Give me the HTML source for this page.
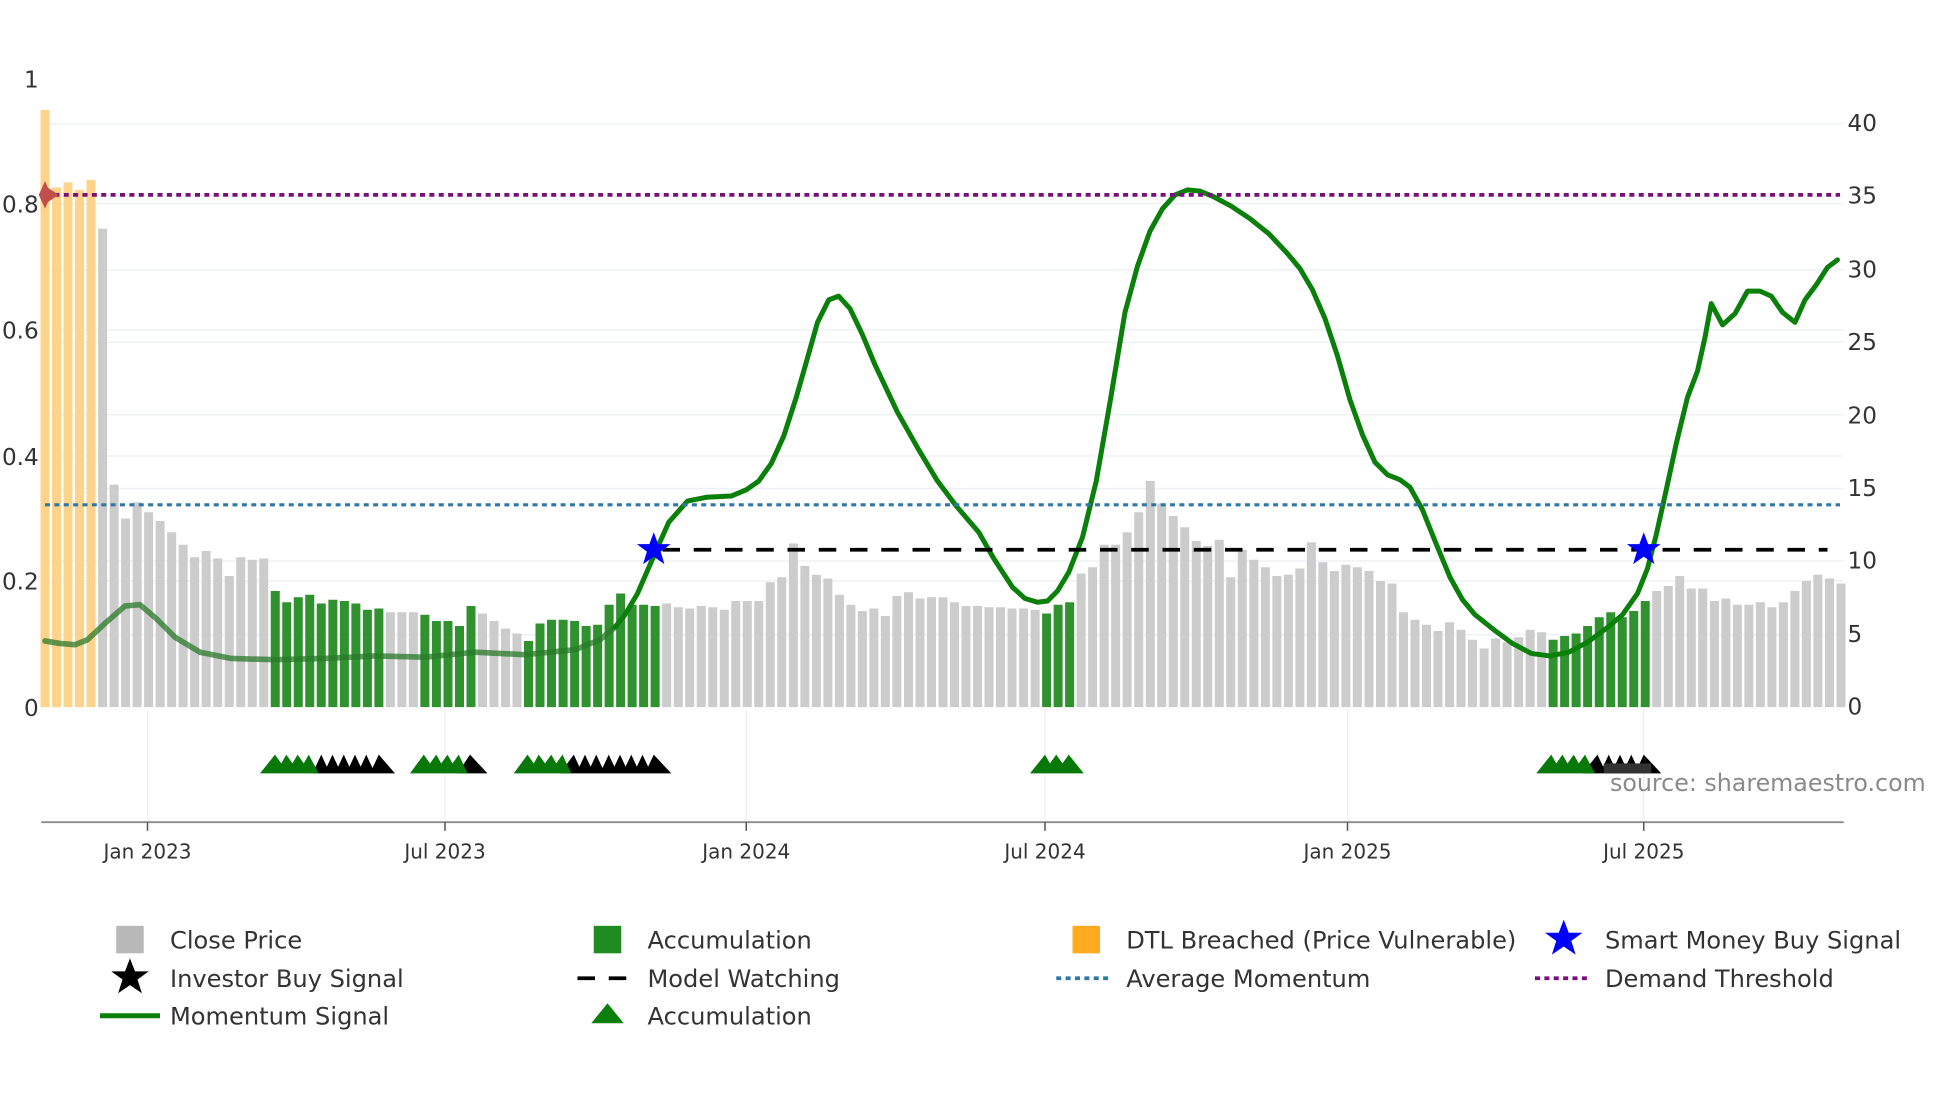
<!DOCTYPE html>
<html><head><meta charset="utf-8"><style>
html,body{margin:0;padding:0;background:#fff;}
svg{display:block;}
text{font-family:"DejaVu Sans","Liberation Sans",sans-serif;fill:#333;}
</style></head><body>
<svg width="1960" height="1102" viewBox="0 0 1568 882" preserveAspectRatio="none" xmlns="http://www.w3.org/2000/svg">
<rect width="1568" height="882" fill="#fff"/>
<g stroke="#eceff3" stroke-width="1">
<path d="M33 99H1475M33 157H1475M33 216H1475M33 274H1475M33 332H1475M33 391H1475M33 449H1475M33 508H1475"/>
<path d="M33 163H1475M33 264H1475M33 365H1475M33 465H1475"/>
<path d="M118 568V658M356 568V658M597 568V658M836 568V658M1078 568V658M1315 568V658"/>
</g>
<path fill="#ffd48a" d="M32.4,566V88h7.2V566zM41.6,566V150h7.2V566zM50.8,566V146h7.2V566zM60,566V152h7.2V566zM69.2,566V144h7.2V566z"/>
<path fill="#cccccc" d="M78.5,566V183h7.2V566zM87.7,566V388h7.2V566zM96.9,566V415h7.2V566zM106.1,566V402h7.2V566zM115.3,566V410h7.2V566zM124.5,566V417h7.2V566zM133.7,566V426h7.2V566zM142.9,566V436h7.2V566zM152.1,566V446h7.2V566zM161.3,566V441h7.2V566zM170.6,566V447h7.2V566zM179.8,566V461h7.2V566zM189,566V446h7.2V566zM198.2,566V448h7.2V566zM207.4,566V447h7.2V566z
M308.7,566V490h7.2V566zM317.9,566V490h7.2V566zM327.1,566V490h7.2V566z
M382.4,566V491h7.2V566zM391.6,566V497h7.2V566zM400.8,566V503h7.2V566zM410,566V507h7.2V566z
M529.7,566V483h7.2V566zM539,566V486h7.2V566zM548.2,566V487h7.2V566zM557.4,566V485h7.2V566zM566.6,566V486h7.2V566zM575.8,566V488h7.2V566zM585,566V481h7.2V566zM594.2,566V481h7.2V566zM603.4,566V481h7.2V566zM612.6,566V466h7.2V566zM621.8,566V462h7.2V566zM631.1,566V435h7.2V566zM640.3,566V453h7.2V566zM649.5,566V460h7.2V566zM658.7,566V463h7.2V566zM667.9,566V476h7.2V566zM677.1,566V484h7.2V566zM686.3,566V489h7.2V566zM695.5,566V487h7.2V566zM704.7,566V493h7.2V566zM713.9,566V477h7.2V566zM723.2,566V474h7.2V566zM732.4,566V479h7.2V566zM741.6,566V478h7.2V566zM750.8,566V478h7.2V566zM760,566V482h7.2V566zM769.2,566V485h7.2V566zM778.4,566V485h7.2V566zM787.6,566V486h7.2V566zM796.8,566V486h7.2V566zM806,566V487h7.2V566zM815.3,566V487h7.2V566zM824.5,566V488h7.2V566z
M861.3,566V459h7.2V566zM870.5,566V454h7.2V566zM879.7,566V436h7.2V566zM888.9,566V436h7.2V566zM898.1,566V426h7.2V566zM907.4,566V410h7.2V566zM916.6,566V385h7.2V566zM925.8,566V403h7.2V566zM935,566V413h7.2V566zM944.2,566V422h7.2V566zM953.4,566V433h7.2V566zM962.6,566V437h7.2V566zM971.8,566V432h7.2V566zM981,566V462h7.2V566zM990.2,566V440h7.2V566zM999.5,566V448h7.2V566zM1008.7,566V454h7.2V566zM1017.9,566V461h7.2V566zM1027.1,566V460h7.2V566zM1036.3,566V455h7.2V566zM1045.5,566V434h7.2V566zM1054.7,566V450h7.2V566zM1063.9,566V457h7.2V566zM1073.1,566V452h7.2V566zM1082.3,566V454h7.2V566zM1091.6,566V457h7.2V566zM1100.8,566V465h7.2V566zM1110,566V467h7.2V566zM1119.2,566V490h7.2V566zM1128.4,566V496h7.2V566zM1137.6,566V500h7.2V566zM1146.8,566V505h7.2V566zM1156,566V498h7.2V566zM1165.2,566V504h7.2V566zM1174.4,566V512h7.2V566zM1183.7,566V519h7.2V566zM1192.9,566V511h7.2V566zM1202.1,566V514h7.2V566zM1211.3,566V510h7.2V566zM1220.5,566V504h7.2V566zM1229.7,566V506h7.2V566z
M1321.8,566V473h7.2V566zM1331,566V469h7.2V566zM1340.2,566V461h7.2V566zM1349.4,566V471h7.2V566zM1358.6,566V471h7.2V566zM1367.9,566V481h7.2V566zM1377.1,566V479h7.2V566zM1386.3,566V484h7.2V566zM1395.5,566V484h7.2V566zM1404.7,566V482h7.2V566zM1413.9,566V486h7.2V566zM1423.1,566V482h7.2V566zM1432.3,566V473h7.2V566zM1441.5,566V465h7.2V566zM1450.7,566V460h7.2V566zM1460,566V463h7.2V566zM1469.2,566V467h7.2V566z"/>
<path fill="#2f922f" d="M216.6,566V473h7.2V566zM225.8,566V482h7.2V566zM235,566V478h7.2V566zM244.2,566V476h7.2V566zM253.4,566V483h7.2V566zM262.7,566V480h7.2V566zM271.9,566V481h7.2V566zM281.1,566V483h7.2V566zM290.3,566V488h7.2V566zM299.5,566V487h7.2V566z
M336.3,566V492h7.2V566zM345.5,566V497h7.2V566zM354.8,566V497h7.2V566zM364,566V501h7.2V566zM373.2,566V485h7.2V566z
M419.2,566V513h7.2V566zM428.4,566V499h7.2V566zM437.6,566V496h7.2V566zM446.9,566V496h7.2V566zM456.1,566V497h7.2V566zM465.3,566V501h7.2V566zM474.5,566V500h7.2V566zM483.7,566V484h7.2V566zM492.9,566V475h7.2V566zM502.1,566V484h7.2V566zM511.3,566V484h7.2V566zM520.5,566V485h7.2V566z
M833.7,566V491h7.2V566zM842.9,566V484h7.2V566zM852.1,566V482h7.2V566z
M1238.9,566V512h7.2V566zM1248.1,566V509h7.2V566zM1257.3,566V507h7.2V566zM1266.5,566V501h7.2V566zM1275.8,566V494h7.2V566zM1285,566V490h7.2V566zM1294.2,566V494h7.2V566zM1303.4,566V489h7.2V566zM1312.6,566V481h7.2V566z"/>
<polyline fill="none" stroke="#2a7a2a" stroke-opacity="0.75" stroke-width="4.5" stroke-linejoin="round" stroke-linecap="round" points="36,513 48,515 60,516 70,512 85,498 100,485 112,484 125,495 140,510 160,522 185,527 220,528 260,527 300,525 340,526 380,522 420,524 460,520 480,512 492,502"/>
<polyline fill="none" stroke="#0a800a" stroke-width="4" stroke-linejoin="round" stroke-linecap="round" points="492,502 500,492 510,475 523,445 535,418 550,401 565,398 585,397 597,392 607,385 617,371 627,349 637,318 645,290 654,258 663,240 671,237 680,247 690,268 700,292 718,330 735,360 750,385 765,405 783,426 795,447 810,470 820,479 830,482 838,481 846,473 855,458 866,430 877,385 888,322 900,250 910,213 920,185 930,167 940,156 950,152 960,153 970,157 985,165 1000,175 1015,187 1030,203 1040,215 1050,232 1060,255 1070,285 1080,320 1090,348 1100,370 1110,380 1120,384 1128,390 1138,408 1148,433 1160,462 1170,480 1180,492 1195,504 1210,515 1225,523 1240,525 1255,522 1270,514 1285,503 1298,492 1310,475 1318,455 1325,428 1333,392 1341,355 1350,318 1358,297 1364,270 1369,243 1378,260 1388,251 1398,233 1408,233 1417,237 1426,250 1436,258 1444,240 1453,228 1462,214 1470,208"/>
<line x1="36" y1="156" x2="1472" y2="156" stroke="#7a0e7a" stroke-width="3" stroke-dasharray="4 3.5"/>
<line x1="36" y1="404" x2="1472" y2="404" stroke="#2e78a8" stroke-width="2.5" stroke-dasharray="4 3.5"/>
<line x1="530" y1="440" x2="1462" y2="440" stroke="#000" stroke-width="3" stroke-dasharray="14 11"/>
<path fill="#c2504a" d="M36,145L41,156L36,167L31,156Z"/><path fill="#c2504a" d="M38,150L47,156L38,162Z"/>
<path fill="#0000ff" d="M523,426L526.5,435.5L536.5,435.5L528.5,441.5L531.5,451.5L523,445.5L514.5,451.5L517.5,441.5L509.5,435.5L519.5,435.5Z"/>
<path fill="#0000ff" d="M1315,426L1318.5,435.5L1328.5,435.5L1320.5,441.5L1323.5,451.5L1315,445.5L1306.5,451.5L1309.5,441.5L1301.5,435.5L1311.5,435.5Z"/>
<g fill="#000">
<path d="M250,619L257,604L264,619ZM259,619L266,604L273,619ZM268,619L275,604L282,619ZM277,619L284,604L291,619ZM286,619L293,604L300,619ZM296,619L303,604L316,619Z"/>
<path d="M366,619L376,604L390,619Z"/>
<path d="M448,619L459,604L466,619ZM461,619L468,604L475,619ZM470,619L477,604L484,619ZM480,619L487,604L494,619ZM489,619L496,604L503,619ZM498,619L505,604L512,619ZM507,619L514,604L521,619ZM516,619L523,604L537,619Z"/>
<path d="M1266,619L1278,604L1285,619ZM1280,619L1287,604L1294,619ZM1289,619L1296,604L1303,619ZM1298,619L1305,604L1312,619ZM1308,619L1315,604L1329,619Z"/>
</g>
<rect x="1283" y="611" width="38" height="8" fill="#333"/>
<g fill="#087808">
<path d="M208,619L220,604L225,611L229,604L234,611L238,604L243,611L247,604L255,619Z"/>
<path d="M328,619L339,604L344,611L349,604L353,611L358,604L362,611L367,604L374,619Z"/>
<path d="M411,619L422,604L427,611L431,604L436,611L441,604L445,611L450,604L457,619Z"/>
<path d="M824,619L836,604L840,611L845,604L850,611L855,604L867,619Z"/>
<path d="M1229,619L1241,604L1245,611L1250,604L1254,611L1259,604L1263,611L1268,604L1276,619Z"/>
</g>
<line x1="33" y1="658" x2="1475" y2="658" stroke="#8c8c8c" stroke-width="1.5"/>
<g stroke="#555" stroke-width="1.2"><path d="M118 658V665M356 658V665M597 658V665M836 658V665M1078 658V665M1315 658V665"/></g>
<g font-size="16" text-anchor="middle">
<text x="118" y="687">Jan 2023</text><text x="356" y="687">Jul 2023</text><text x="597" y="687">Jan 2024</text><text x="836" y="687">Jul 2024</text><text x="1078" y="687">Jan 2025</text><text x="1315" y="687">Jul 2025</text>
</g>
<g font-size="18.5" text-anchor="end">
<text x="31" y="70">1</text><text x="31" y="170">0.8</text><text x="31" y="271">0.6</text><text x="31" y="372">0.4</text><text x="31" y="472">0.2</text><text x="31" y="573">0</text>
</g>
<g font-size="18.5">
<text x="1478" y="105">40</text><text x="1478" y="163">35</text><text x="1478" y="222">30</text><text x="1478" y="280">25</text><text x="1478" y="339">20</text><text x="1478" y="397">15</text><text x="1478" y="455">10</text><text x="1478" y="514">5</text><text x="1478" y="572">0</text>
</g>
<text x="1288" y="633" font-size="19" style="fill:#8a8a8a">source: sharemaestro.com</text>
<g font-size="19.3">
<rect x="93" y="741" width="22" height="22" fill="#b8b8b8"/><text x="136" y="759">Close Price</text>
<rect x="475" y="741" width="22" height="22" fill="#1e8c1e"/><text x="518" y="759">Accumulation</text>
<rect x="858" y="741" width="22" height="22" fill="#ffab1f"/><text x="901" y="759">DTL Breached (Price Vulnerable)</text>
<path fill="#0000ff" d="M1251,736L1255,746.5L1266,746.5L1257,753L1260.5,764L1251,757.5L1241.5,764L1245,753L1236,746.5L1247,746.5Z"/><text x="1284" y="759">Smart Money Buy Signal</text>
<path fill="#000" d="M104,767L108,777.5L119,777.5L110,784L113.5,795L104,788.5L94.5,795L98,784L89,777.5L100,777.5Z"/><text x="136" y="790">Investor Buy Signal</text>
<path d="M462 783H506" stroke="#000" stroke-width="3" stroke-dasharray="14 11"/><text x="518" y="790">Model Watching</text>
<path d="M845 783H889" stroke="#2e78a8" stroke-width="3" stroke-dasharray="4 3.5"/><text x="901" y="790">Average Momentum</text>
<path d="M1228 783H1272" stroke="#7a0e7a" stroke-width="3" stroke-dasharray="4 3.5"/><text x="1284" y="790">Demand Threshold</text>
<path d="M80 813H128" stroke="#0a800a" stroke-width="4"/><text x="136" y="820">Momentum Signal</text>
<path fill="#0a800a" d="M486,803L499,819L473,819Z"/><text x="518" y="820">Accumulation</text>
</g>
</svg>
</body></html>
